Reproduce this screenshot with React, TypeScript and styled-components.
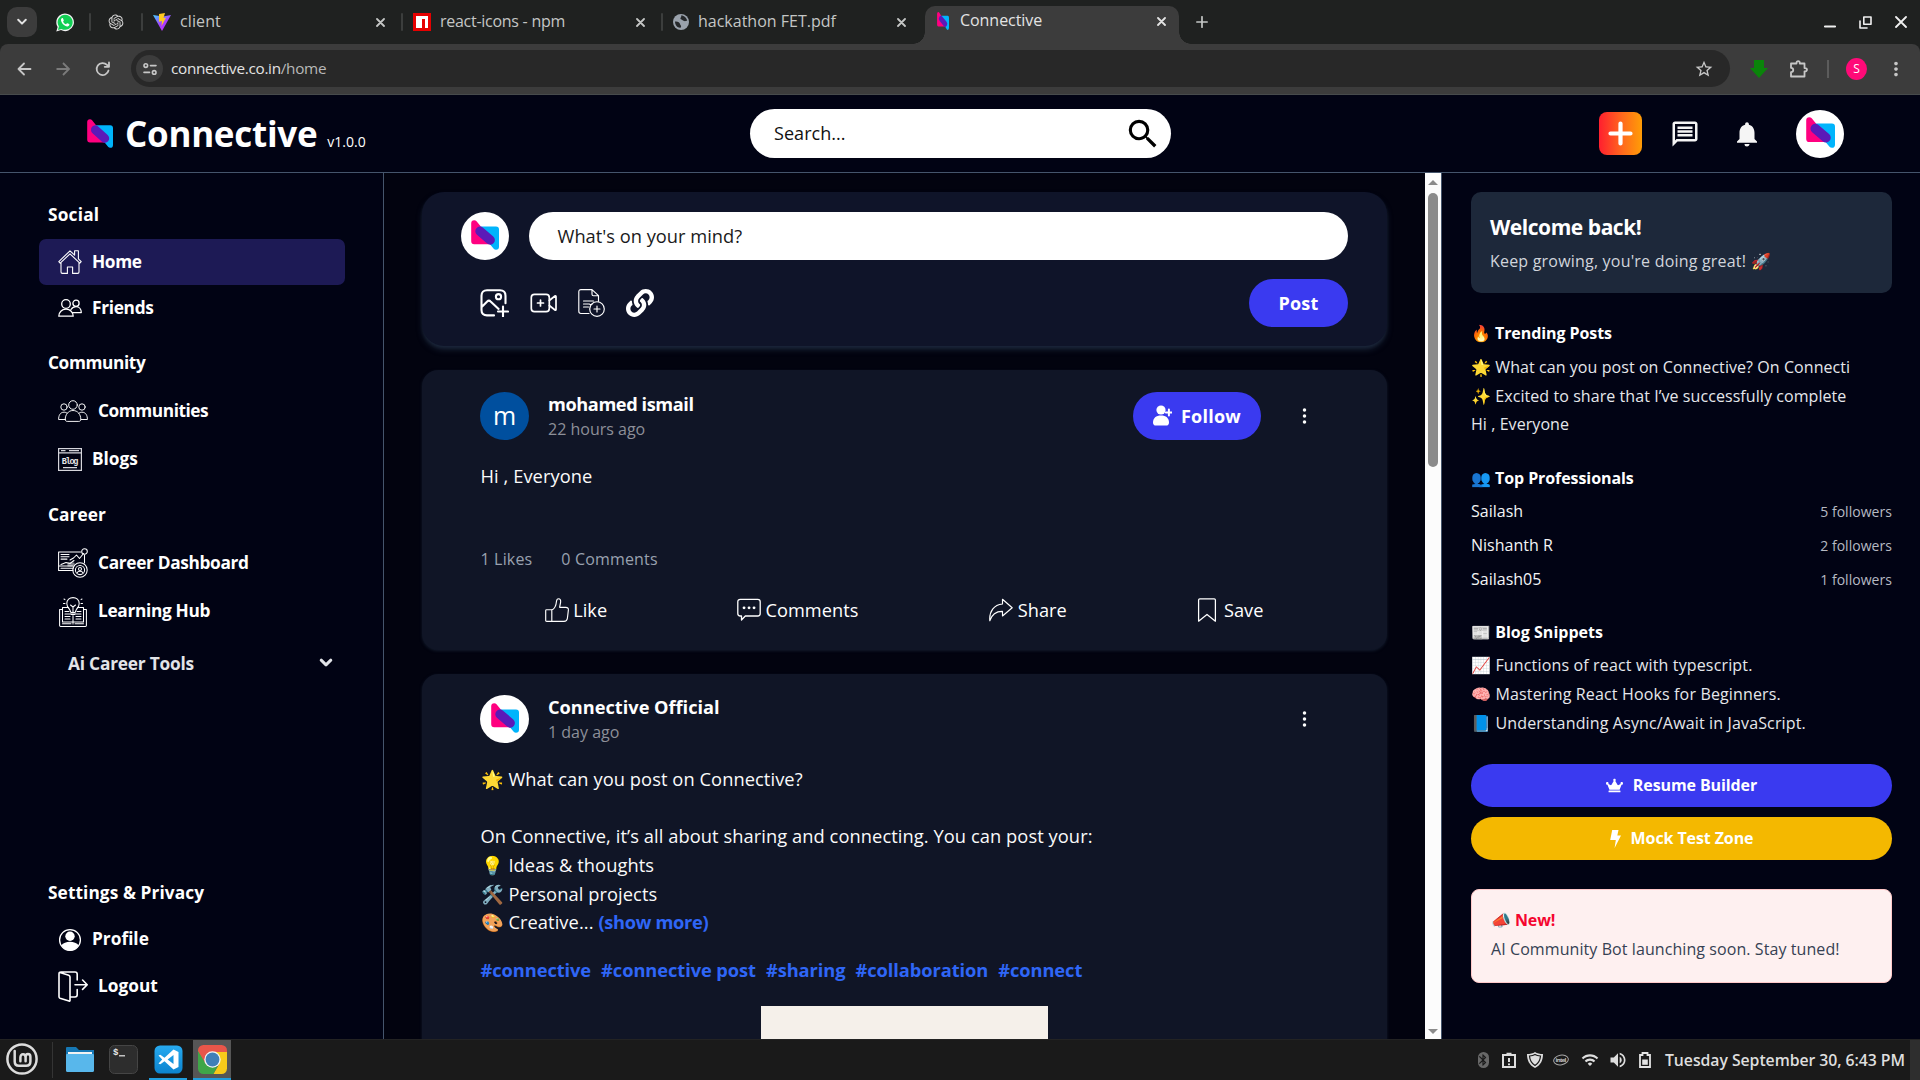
import React from "react";
import styled, { createGlobalStyle } from "styled-components";
import { MdSearch, MdOutlineMessage, MdNotifications, MdOutlineStarBorder, MdMoreVert, MdWifi, MdVolumeUp, MdBluetooth } from "react-icons/md";
import { FaLink, FaCrown } from "react-icons/fa";
import { RiOpenaiFill } from "react-icons/ri";

const GlobalStyle = createGlobalStyle`
  *, *::before, *::after { box-sizing: border-box; }
  body {
    margin: 0;
    overflow: hidden;
    background: #010314;
    color: #fff;
    font-family: "Open Sans", "Noto Sans", sans-serif;
  }
  svg { display: block; flex: none; }
`;

type Spaced = { $ls?: number };

const Screen = styled.div`
  width: 1920px;
  height: 1080px;
  display: flex;
  flex-direction: column;
  overflow: hidden;
`;

/* ---------- browser window ---------- */

const TabStrip = styled.div`
  height: 44px;
  display: flex;
  align-items: center;
  background: #1f2120;
  color: #c4c6c5;
  padding-left: 7px;
`;
const TabSearch = styled.div`
  width: 30px;
  height: 30px;
  border-radius: 10px;
  background: #3c3c3c;
  color: #e3e3e3;
  display: flex;
  align-items: center;
  justify-content: center;
`;
const PinnedTab = styled.div<{ $w: number; $shift?: number }>`
  width: ${(p) => p.$w}px;
  padding-left: ${(p) => p.$shift ?? 0}px;
  display: flex;
  justify-content: center;
`;
const TabDivider = styled.div`
  width: 2px;
  height: 18px;
  border-radius: 1px;
  background: #3c3e3d;
`;
const Tab = styled.div<{ $w: number; $active?: boolean; $right?: number }>`
  width: ${(p) => p.$w}px;
  height: ${(p) => (p.$active ? 38 : 30)}px;
  align-self: ${(p) => (p.$active ? "flex-end" : "center")};
  display: flex;
  align-items: center;
  gap: 9px;
  padding: ${(p) => (p.$active ? "0 13px 8px 12px" : `0 ${p.$right ?? 16}px 0 10px`)};
  background: ${(p) => (p.$active ? "#3c3c3c" : "transparent")};
  color: ${(p) => (p.$active ? "#e3e3e3" : "#c4c6c5")};
  border-radius: 10px 10px 0 0;
  position: relative;
  ${(p) =>
    p.$active &&
    `gap: 11px;
    &::before, &::after {
      content: "";
      position: absolute;
      bottom: 0;
      width: 12px;
      height: 12px;
    }
    &::before { left: -12px; background: radial-gradient(circle at 0 0, transparent 11.5px, #3c3c3c 12px); }
    &::after { right: -12px; background: radial-gradient(circle at 100% 0, transparent 11.5px, #3c3c3c 12px); }`}
`;
const TabTitle = styled.span<Spaced>`
  flex: 1;
  padding-bottom: 2px;
  font-size: 16px;
  line-height: 22px;
  white-space: nowrap;
  letter-spacing: ${(p) => p.$ls ?? 0}px;
`;
const NewTab = styled.div`
  width: 45px;
  display: flex;
  justify-content: center;
`;
const WindowButtons = styled.div`
  margin-left: auto;
  padding-right: 13px;
  display: flex;
  align-items: center;
  gap: 23px;
  color: #f0f0f0;
`;
const ToolbarBack = styled.div`
  background: #1f2120;
`;
const Toolbar = styled.div`
  height: 51px;
  display: flex;
  align-items: center;
  padding: 0 13px 1px 15px;
  background: #3c3c3c;
  border-bottom: 1px solid #474b4c;
  border-radius: 8px 8px 0 0;
  color: #c7c7c7;
`;
const NavButtons = styled.div`
  display: flex;
  width: 116px;
  gap: 21px;
`;
const Omnibox = styled.div`
  flex: 1;
  height: 37px;
  border-radius: 19px;
  background: #282828;
  display: flex;
  align-items: center;
  padding: 0 16px 0 5px;
`;
const SiteInfo = styled.div`
  width: 27px;
  height: 27px;
  border-radius: 50%;
  background: #3c3c3c;
  display: flex;
  align-items: center;
  justify-content: center;
`;
const Url = styled.span`
  flex: 1;
  margin-left: 8px;
  padding-bottom: 1px;
  font-size: 15.3px;
  letter-spacing: -0.3px;
  color: #e3e3e3;
  span { color: #b8b8b8; }
`;
const Extensions = styled.div`
  display: flex;
  align-items: center;
  width: 177px;
  padding-left: 20px;
`;
const ToolSeparator = styled.div`
  width: 2px;
  height: 18px;
  margin: 0 17px 0 18px;
  background: #5c5c5c;
`;
const ProfileDot = styled.div`
  width: 22px;
  height: 22px;
  margin-right: 18px;
  border-radius: 50%;
  background: #ff0a78;
  color: #fff;
  font-size: 12px;
  display: flex;
  align-items: center;
  justify-content: center;
`;

/* ---------- site header ---------- */

const Header = styled.header`
  height: 78px;
  display: grid;
  grid-template-columns: 750px 421px 1fr;
  align-items: center;
  border-bottom: 1px solid #45556c;
  background: #010314;
`;
const Brand = styled.div`
  display: flex;
  align-items: center;
  padding-left: 87px;
  height: 77px;
`;
const BrandName = styled.h1`
  margin: 0 10px 0 12px;
  font-size: 35px;
  line-height: 44px;
  font-weight: 700;
  letter-spacing: -0.28px;
`;
const Version = styled.span`
  font-size: 14px;
  line-height: 18px;
  padding-top: 16px;
`;
const SearchBox = styled.div`
  height: 49px;
  border-radius: 25px;
  background: #fff;
  color: #111;
  display: flex;
  align-items: center;
  justify-content: space-between;
  padding: 0 9px 0 24px;
  font-size: 18px;
  letter-spacing: 0.05px;
  span { padding-bottom: 1px; }
`;
const HeaderActions = styled.div`
  display: flex;
  align-items: center;
  justify-content: flex-end;
  padding-right: 76px;
`;
const CreateButton = styled.div`
  width: 43px;
  height: 43px;
  border-radius: 8px;
  background: linear-gradient(90deg, #ff1f2f, #ff6a1c 55%, #ff9d06);
  display: flex;
  align-items: center;
  justify-content: center;
  margin-right: 28px;
`;
const HeaderIcon = styled.div<{ $gap: number }>`
  margin-right: ${(p) => p.$gap}px;
  color: #f5f5f5;
`;
const Avatar = styled.div<{ $bg?: string; $w?: number }>`
  width: ${(p) => p.$w ?? 48}px;
  height: 48px;
  border-radius: 50%;
  flex: none;
  background: ${(p) => p.$bg ?? "#fff"};
  display: flex;
  align-items: center;
  justify-content: center;
  font-size: 25px;
  line-height: 44px;
  padding-bottom: 2px;
`;

/* ---------- columns ---------- */

const Columns = styled.main`
  height: 866px;
  display: grid;
  grid-template-columns: 384px 1041px 16px 479px;
  overflow: hidden;
`;
const Sidebar = styled.nav`
  display: flex;
  flex-direction: column;
  padding: 27px 38px 28px 39px;
  border-right: 1px solid #45556c;
`;
const SideHeading = styled.h2<Spaced & { $top?: number }>`
  margin: ${(p) => p.$top ?? 0}px 0 9px 9px;
  font-size: 17.3px;
  line-height: 30px;
  font-weight: 700;
  letter-spacing: ${(p) => p.$ls ?? 0}px;
`;
const SideItem = styled.div<Spaced & { $active?: boolean; $big?: boolean }>`
  height: ${(p) => (p.$big ? 48.5 : 46)}px;
  flex: none;
  display: flex;
  align-items: center;
  gap: 10px;
  padding-left: 19px;
  border-radius: 7px;
  background: ${(p) => (p.$active ? "#1d1a55" : "transparent")};
  font-size: 17.3px;
  font-weight: 700;
  letter-spacing: ${(p) => p.$ls ?? 0}px;
  span { padding-bottom: 2px; }
`;
const SideGroup = styled.div`
  height: 46px;
  margin-top: 5px;
  display: flex;
  align-items: center;
  justify-content: space-between;
  padding: 0 12px 2px 29px;
  color: #e2e4e8;
  font-size: 17.3px;
  font-weight: 700;
  letter-spacing: -0.2px;
`;
const SideSpacer = styled.div`
  flex: 1;
`;

const Feed = styled.section`
  background: #02030f;
  padding: 19px 38px 0;
  overflow: hidden;
`;
const Composer = styled.div`
  height: 154px;
  border-radius: 22px;
  padding: 20px 39px;
  background: #0f1429;
  box-shadow: 0 4px 6px -1px #1d293d, 0 2px 4px -2px #1d293d;
`;
const ComposerRow = styled.div`
  display: flex;
  gap: 20px;
`;
const ComposerInput = styled.div`
  flex: 1;
  height: 48px;
  border-radius: 24px;
  background: #fff;
  color: #1a1a1a;
  padding: 0 28.5px 2px;
  display: flex;
  align-items: center;
  font-size: 18.3px;
`;
const ComposerTools = styled.div`
  margin-top: 19px;
  height: 48px;
  padding-left: 19px;
  display: flex;
  align-items: center;
  gap: 19.6px;
`;
const Pill = styled.div<{ $w: number }>`
  width: ${(p) => p.$w}px;
  height: 48px;
  margin-left: auto;
  border-radius: 24px;
  background: #3a3af0;
  display: flex;
  align-items: center;
  justify-content: center;
  gap: 9px;
  padding-bottom: 1px;
  font-size: 18px;
  font-weight: 700;
  letter-spacing: 0.25px;
`;

const Card = styled.article<{ $h?: number; $top?: number }>`
  margin-top: 24px;
  height: ${(p) => p.$h ?? 400}px;
  border-radius: 16px;
  background: #101526;
  padding: ${(p) => p.$top ?? 21}px 58px 0;
  box-shadow: 0 1px 3px rgba(29, 41, 61, 0.6);
`;
const PostHead = styled.div`
  display: flex;
  align-items: center;
  height: 48px;
`;
const Author = styled.div`
  margin-left: 19px;
  padding-top: 2px;
`;
const AuthorName = styled.div<Spaced>`
  font-size: 18.2px;
  line-height: 25px;
  font-weight: 700;
  letter-spacing: ${(p) => p.$ls ?? 0}px;
`;
const PostTime = styled.div`
  font-size: 16px;
  line-height: 25px;
  color: #8d8f98;
`;
const MoreButton = styled.div<{ $push?: boolean }>`
  width: 50px;
  margin-left: ${(p) => (p.$push ? "auto" : "18px")};
  display: flex;
  justify-content: center;
`;
const PostBody = styled.div`
  margin-top: 21.5px;
  padding-left: 0.5px;
  color: #fafafa;
`;
const PostLine = styled.div`
  display: flex;
  gap: 5px;
  min-height: 28.8px;
  font-size: 18.3px;
  line-height: 28.8px;
  letter-spacing: 0.07px;
  white-space: pre;
`;
const ShowMore = styled.span`
  color: #2f66f6;
  font-weight: 700;
  letter-spacing: -0.35px;
`;
const Counts = styled.div`
  margin-top: 55px;
  display: flex;
  gap: 29px;
  font-size: 16px;
  line-height: 28px;
  letter-spacing: 0.16px;
  padding-left: 0.5px;
  color: #99a1af;
`;
const Actions = styled.div`
  margin-top: 13px;
  height: 48px;
  display: flex;
  align-items: center;
  justify-content: space-around;
`;
const Action = styled.div<{ $w: number }>`
  width: ${(p) => p.$w}px;
  display: flex;
  align-items: center;
  gap: 4.5px;
  font-size: 18.2px;
  letter-spacing: 0.08px;
`;
const Tags = styled.div`
  margin-top: 19px;
  display: flex;
  gap: 10px;
  padding-left: 0.5px;
  font-size: 18.3px;
  line-height: 28.8px;
  font-weight: 700;
  letter-spacing: -0.08px;
  color: #2f66f6;
`;
const PostImage = styled.div`
  width: 287px;
  height: 200px;
  margin: 21px auto 0;
  background: #f5f0ea;
`;

const ScrollTrack = styled.div`
  background: #fcfcfc;
  display: flex;
  flex-direction: column;
  align-items: center;
  padding: 7px 0 5px;
`;
const Arrow = styled.div<{ $down?: boolean }>`
  border: 5px solid transparent;
  ${(p) => (p.$down ? "border-top: 5px solid #8b8b8b; border-bottom: 0;" : "border-bottom: 5px solid #8b8b8b; border-top: 0;")}
`;
const Thumb = styled.div`
  width: 10px;
  height: 274px;
  margin: 8px 0 auto;
  border-radius: 5px;
  background: #8b8b8b;
`;

const RightBar = styled.aside`
  border-left: 1px solid #45556c;
  padding: 19px 28px 0 29px;
`;
const Welcome = styled.div`
  height: 101px;
  padding: 19px 19px;
  border-radius: 10px;
  background: #1d283a;
`;
const WelcomeTitle = styled.div`
  font-size: 21px;
  line-height: 32px;
  font-weight: 700;
  letter-spacing: -0.45px;
`;
const WelcomeText = styled.div`
  font-size: 16px;
  line-height: 36px;
  letter-spacing: 0.2px;
  color: #d1d5dc;
`;
const RightHeading = styled.h3<Spaced & { $top: number; $bottom: number }>`
  margin: ${(p) => p.$top}px 0 ${(p) => p.$bottom}px;
  font-size: 16px;
  line-height: 28.8px;
  font-weight: 700;
  letter-spacing: ${(p) => p.$ls ?? -0.08}px;
`;
const RightLine = styled.div<Spaced>`
  font-size: 16px;
  line-height: 28.8px;
  letter-spacing: ${(p) => p.$ls ?? 0.07}px;
  white-space: nowrap;
  color: #e5e7eb;
`;
const Person = styled.div`
  height: 34px;
  display: flex;
  align-items: center;
  justify-content: space-between;
  font-size: 16px;
  color: #f3f4f6;
  small {
    font-size: 14px;
    color: #b6bac3;
    letter-spacing: 0.04px;
  }
`;
const WideButton = styled.div<{ $bg: string; $top: number }>`
  height: 43px;
  margin-top: ${(p) => p.$top}px;
  border-radius: 22px;
  background: ${(p) => p.$bg};
  display: flex;
  align-items: center;
  justify-content: center;
  gap: 10px;
  font-size: 16px;
  font-weight: 700;
  letter-spacing: -0.1px;
  span { padding-bottom: 1px; }
`;
const Notice = styled.div`
  height: 94px;
  margin-top: 29px;
  padding: 16px 19px;
  border: 1px solid #ffc9c9;
  border-radius: 8px;
  background: #fef0f0;
  font-size: 16px;
  line-height: 29px;
  color: #364153;
  letter-spacing: 0.08px;
`;
const NoticeTitle = styled.div`
  color: #f5052f;
  font-weight: 700;
  letter-spacing: -0.1px;
`;

/* ---------- desktop panel ---------- */

const Taskbar = styled.footer`
  height: 41px;
  display: flex;
  align-items: stretch;
  background: #1a1a1a;
  border-top: 1px solid #232323;
`;
const Launcher = styled.div<{ $w: number; $open?: boolean; $focused?: boolean }>`
  width: ${(p) => p.$w}px;
  display: flex;
  align-items: center;
  justify-content: center;
  padding-bottom: 2px;
  background: ${(p) => (p.$focused ? "#565656" : "transparent")};
  box-shadow: ${(p) => (p.$open ? "inset 0 -2px #1f9ede" : "none")};
  margin-right: ${(p) => (p.$open ? 6 : 0)}px;
`;
const PanelLine = styled.div`
  width: 1px;
  margin: 2px 10px 2px 8px;
  background: #343434;
`;
const Tray = styled.div`
  margin-left: auto;
  display: flex;
  align-items: center;
  color: #dedede;
`;
const TrayIcon = styled.div<{ $w: number; $dim?: boolean }>`
  width: ${(p) => p.$w}px;
  display: flex;
  justify-content: center;
  opacity: ${(p) => (p.$dim ? 0.4 : 1)};
`;
const BluetoothBadge = styled.div`
  width: 11px;
  height: 16px;
  border-radius: 5.5px;
  background: #dedede;
  color: #1a1a1a;
  display: flex;
  align-items: center;
  justify-content: center;
`;
const Clock = styled.div`
  width: 240px;
  margin: 0 5px 0 7px;
  font-size: 15.8px;
  font-weight: 600;
  letter-spacing: -0.05px;
  white-space: nowrap;
`;
const DesktopCorner = styled.div`
  width: 10px;
  height: 100%;
  background: #2e2e2e;
`;

/* ---------- drawings ---------- */

const Logo = ({ w = 28, h = 30 }: { w?: number; h?: number }) => (
  <svg width={w} height={h} viewBox="0 0 28 30" preserveAspectRatio="none">
    <path d="M3.200 3.200 L18 21.200 H3.200 Z" fill="#ff0080" stroke="#ff0080" strokeWidth="6" strokeLinejoin="round" />
    <path d="M10.500 9.400 H25 V26.800 Z" fill="#00b4fc" stroke="#00b4fc" strokeWidth="6" strokeLinejoin="round" />
    <path d="M9 11.200 L19.200 20" stroke="#5b1ab8" strokeWidth="9.400" strokeLinecap="round" />
  </svg>
);

const Line = ({ w, h, vb, sw = 1.5, children }: { w: number; h: number; vb: string; sw?: number; children: React.ReactNode }) => (
  <svg width={w} height={h} viewBox={vb} fill="none" stroke="currentColor" strokeWidth={sw} strokeLinecap="round" strokeLinejoin="round">
    {children}
  </svg>
);

const Close = () => (
  <Line w={9} h={9} vb="0 0 9 9" sw={1.8}>
    <path d="M1 1l7 7M8 1l-7 7" />
  </Line>
);
const WhatsAppIcon = () => (
  <svg width="18" height="19" viewBox="0 0 18 19">
    <path d="M.3 18.500L1.600 14C.7 12.600.3 11 .3 9.300A8.800 8.800 0 1 1 5 17.100z" fill="#f4f4f4" />
    <path d="M1.900 16.900L2.900 13.500A7.500 7.500 0 1 1 5.500 15.900z" fill="#12cf54" />
    <path d="M6.300 5c-.5 0-1.300.7-1.300 2 0 2.700 3.400 6.200 6.300 6.400 1.200 0 2.100-.8 2.100-1.800 0-.4-.1-.4-2-1.300-.5-.2-.7.1-1.300.9-.4.400-2.600-1.300-3-2.500-.1-.3.8-.8.7-1.300C7.300 6 7 5.100 6.700 5z" fill="#fff" />
  </svg>
);
const HomeIcon = () => (
  <Line w={24} h={24} vb="0 0 24 24" sw={1.1}>
    <path d="M.8 11.6L12 .8l4.6 4.4V.8h3.8v8l2.8 2.8-1.4 1.6L12 3.9l-9.800 9.300zM3 12.800V22.100c0 .8.5 1.300 1.300 1.300H9.400V17h5.200v6.400h5.100c.8 0 1.300-.5 1.300-1.300V12.800" />
  </Line>
);
const FriendsIcon = () => (
  <Line w={24} h={18} vb="0 0 24 18" sw={1.3}>
    <circle cx="8" cy="5" r="4.300" />
    <circle cx="18" cy="4.300" r="3.100" />
    <path d="M.8 17.200c0-4 3-7 7.200-7s7.200 3 7.200 7zM13 10.500c1.200-1.800 3-2.800 5-2.800 3.200 0 5.300 2.600 5.300 5.900h-8.500" />
  </Line>
);
const CommunitiesIcon = () => (
  <Line w={30} h={22} vb="0 0 30 22" sw={0.95}>
    <circle cx="15" cy="5" r="4.300" />
    <circle cx="6" cy="7" r="3.200" />
    <circle cx="24" cy="7" r="3.200" />
    <path d="M7.200 19.500c0-5 3-9 7.800-9s7.800 4 7.800 9c0 1.200-.8 1.900-2 1.900H9.200c-1.200 0-2-.7-2-1.900zM7 19.500H.6c0-4 1.600-7.300 5.400-7.300 1.200 0 2.300.3 3.100 1M23 19.500h6.400c0-4-1.600-7.300-5.400-7.300-1.200 0-2.300.3-3.100 1" />
  </Line>
);
const BlogIcon = () => (
  <svg width="24" height="23" viewBox="0 0 24 23" fill="none" stroke="#d6d6dc" strokeWidth="1.200">
    <rect x=".6" y=".6" width="22.800" height="21.800" />
    <path d="M.6 4.800h22.800M3 2.700h4.500M11 2.700h10M5 19.600h14" />
    <text x="3.800" y="15.800" fontFamily="Liberation Mono, monospace" fontSize="8.500" fontWeight="700" fill="#e8e8e8" stroke="none" textLength="16.500">Blog</text>
  </svg>
);
const DashboardIcon = () => (
  <Line w={30} h={30} vb="0 0 30 30" sw={1.05}>
    <path d="M15 22.500H.6V4h22M26.500 7v8M.6 18h14M3 6.500h8M3 8.800h8M3 11.100h6M3 20.200h12M12 12l3.500-2 3 -3 3 3.500 4-5M3 16.500l5-2 4 1 4-3" />
    <path d="M10 15h6v3h-6z" fill="currentColor" opacity=".5" />
    <circle cx="26.500" cy="3.500" r="2.800" />
    <circle cx="22" cy="22" r="7.200" />
    <circle cx="22" cy="22" r="4.600" />
    <circle cx="22" cy="21" r="1.500" />
    <path d="M19.200 24.800c.5-2 5.100-2 5.600 0" />
  </Line>
);
const LearningIcon = () => (
  <Line w={30} h={30} vb="0 0 30 30" sw={1.05}>
    <path d="M11.600 12.500C9.800 10.800 8.800 9 8.800 6.500 8.800 3 11.500.6 15 .6s6.200 2.400 6.200 5.900c0 2.500-1 4.300-2.800 6L17 15.500h-4zM12.500 8l2.500 2 2.500-2M15 10v8M13 15.500v2h4v-2M6 2l1 .6M5.500 6.500H7M24 2l-1 .6M24.500 6.500H23" />
    <path d="M10.500 10.500H4.500V25H15h10.500V10.500h-6M15 19v8M4.500 12.500H1.600V28.500c0 .6.400.9 1 .9h24.800c.6 0 1-.3 1-.9V12.500h-2.900M4.500 26.800h8.500M17 26.800h8.500M7 17h5M7 19.500h5M7 22h5M18 17h5M18 19.500h5M18 22h5M7 14.500h4M19 14.500h4" />
  </Line>
);
const ProfileIcon = () => (
  <svg width="24" height="24" viewBox="0 0 24 24">
    <circle cx="12" cy="12" r="10.400" fill="none" stroke="#fff" strokeWidth="1.300" />
    <circle cx="12" cy="8.300" r="4.700" fill="#fff" />
    <path d="M3.300 17.300C5.200 14.900 8.300 13.700 12 13.700s6.800 1.200 8.700 3.600C19 20.800 15.800 22.900 12 22.900S5 20.800 3.300 17.300z" fill="#fff" />
  </svg>
);
const LogoutIcon = () => (
  <Line w={30} h={31} vb="0 0 30 31" sw={1.600}>
    <path d="M1 2.800C1 1.600 1.800 1 3 1h14c1.500 0 2.200.7 2.200 2.200V9M19.200 18.500v5.300c0 1.500-.7 2.200-2.200 2.200h-4.500M2 1.500l8.700 2.700c.8.300 1.300.8 1.300 1.700v23.600c0 .6-.4.8-1 .6L2 27.200c-.7-.3-1-.8-1-1.500V2.800M17 13.700h12M24.600 9l4.600 4.700-4.600 4.700" />
  </Line>
);
const ImageIcon = () => (
  <Line w={29} h={28} vb="0 0 29 28" sw={2.100}>
    <path d="M14 26.400H7c-3.500 0-5.500-2-5.500-5.500V6.800C1.500 3.300 3.500 1.300 7 1.300h13c3.500 0 5.500 2 5.500 5.500v7.500M1.700 18l5.500-5.600c1-1 2.400-1 3.400 0l8 7.500M18 22.500h10M23 17.500v10" />
    <circle cx="18.500" cy="7.700" r="2.600" />
  </Line>
);
const VideoIcon = () => (
  <Line w={29} h={20} vb="0 0 29 20" sw={1.700}>
    <rect x="2.300" y="1.300" width="18" height="17.300" rx="3.200" />
    <path d="M8.500 10h6M11.500 7v6M20.300 7.500l5.700-4.500c.5-.4 1-.1 1 .5v13c0 .6-.5.9-1 .5l-5.700-4.500" />
  </Line>
);
const DocIcon = () => (
  <Line w={29} h={28} vb="0 0 29 28" sw={1.150}>
    <path d="M12 24.500H4C2.600 24.500 1.800 23.700 1.800 22.300V2.800C1.800 1.400 2.600.6 4 .6h11l6.500 6v5.700M15 .6v4.600c0 1 .5 1.500 1.500 1.500h5M6.500 12h10M6.500 15h6M6.500 18h5M13 15.500h2" />
    <circle cx="20" cy="20" r="7.300" />
    <path d="M17 20h6M20 17v6" />
  </Line>
);
const PersonPlus = () => (
  <svg width="19" height="21" viewBox="0 0 19 21" fill="#fff">
    <circle cx="8" cy="5" r="4.600" />
    <path d="M0 17.500C0 13 3 10.400 8 10.400s8 2.600 8 7.100c0 2-1 3.100-3 3.100H3c-2 0-3-1.100-3-3.100z" />
    <path d="M15.900 4.500v6M12.900 7.500h6" stroke="#fff" strokeWidth="2" strokeLinecap="round" />
  </svg>
);
const Dots = () => (
  <svg width="6" height="16" viewBox="0 0 6 16" fill="#fff">
    <circle cx="3.500" cy="2" r="1.750" />
    <circle cx="3.500" cy="8" r="1.750" />
    <circle cx="3.500" cy="14" r="1.750" />
  </svg>
);
const LikeIcon = () => (
  <Line w={24} h={24} vb="0 0 24 24" sw={1.150}>
    <path d="M.7 12.500c0-.5.300-.8.800-.8h5.300v11.700H1.700c-.6 0-1-.4-1-1zM6.800 12c3-1.200 4.300-4.300 4.700-8.700.2-1.700.8-2.600 2-2.600 1.700 0 2.500 1.400 2 4.200l-.9 4.400h6.200c1.700 0 2.700 1 2.600 2.600l-1 8.400c-.3 2.200-1.200 3.100-3.400 3.100H6.800" />
  </Line>
);
const CommentIcon = () => (
  <Line w={24} h={24} vb="0 0 24 24" sw={1.300}>
    <path d="M3.300 1.300h17.400c1.600 0 2.500.9 2.500 2.500v11.700c0 1.600-.9 2.500-2.500 2.500H8.300l-3.800 4V18H3.300C1.700 18 .8 17.100.8 15.500V3.800c0-1.600.9-2.500 2.500-2.500z" />
    <path d="M7 9.800h.1M12 9.800h.1M17 9.800h.1" strokeWidth="2.800" />
  </Line>
);
const ShareIcon = () => (
  <Line w={24} h={24} vb="0 0 24 24" sw={1.150}>
    <path d="M13.500 1.200L23.200 9.800l-9.700 8.200v-4.600C7.500 13.300 3 16 .8 22.800 0 13.500 5 6.600 13.500 6z" />
  </Line>
);
const SaveIcon = () => (
  <Line w={24} h={24} vb="0 0 24 24" sw={1.250}>
    <path d="M3.600 2c0-.8.400-1.200 1.200-1.200h14.400c.8 0 1.200.4 1.200 1.200v21.200L12 16.500l-8.400 6.700z" />
  </Line>
);
const BoltIcon = () => (
  <svg width="11" height="18" viewBox="0 0 11 18" fill="#fff">
    <path d="M2.200 0h6.300L7.300 5.500H11L4.600 18 5.800 10H.2z" />
  </svg>
);
const ViteIcon = () => (
  <svg width="18" height="18" viewBox="0 0 18 18">
    <defs>
      <linearGradient id="vite" x1="0" y1="0" x2=".7" y2="1">
        <stop offset="0" stopColor="#41d1ff" />
        <stop offset=".6" stopColor="#a83cff" />
        <stop offset="1" stopColor="#bd34fe" />
      </linearGradient>
    </defs>
    <path d="M0 2l9 16 9-16-8 1.400z" fill="url(#vite)" />
    <path d="M6 1l6-1-1.500 5L13 4.800 8.500 13l.5-5-3 .7z" fill="#ffc91f" />
  </svg>
);
const NpmIcon = () => (
  <svg width="18" height="18" viewBox="0 0 18 18">
    <path d="M0 0h18v18H0z" fill="#e60000" />
    <path d="M3 3h12v12h-3V6H9v9H3z" fill="#fff" />
  </svg>
);
const GlobeIcon = () => (
  <svg width="16" height="16" viewBox="0 0 16 16">
    <circle cx="8" cy="8" r="8" fill="#9aa2ac" />
    <path d="M2 7.500c3-.3 4.500.7 5 2.500.3 1.500 1.500 1 1 3.500-3 .8-6-2-6-6zM8 1.500c1 1.500-1 2-.5 3.500 1.500.5 2 1.500 3.500 2s2-.5 3.200 0C14 4 11 1.300 8 1.500z" fill="#26292b" />
  </svg>
);
const MintIcon = () => (
  <svg width="32" height="32" viewBox="0 0 32 32" fill="none" stroke="#dcdcdc">
    <circle cx="16" cy="16" r="14.600" strokeWidth="2.500" />
    <path d="M8.700 8v10.500c0 2.800 1.500 4.300 4.200 4.300h7.200c2.700 0 4.300-1.500 4.300-4.300v-4.700c0-3.800-4.800-3.800-4.800 0v4.400M19.600 14.500c0-4.500-5.200-4.500-5.200 0v3.700" strokeWidth="2.500" strokeLinecap="round" />
  </svg>
);
const FolderIcon = () => (
  <svg width="28" height="25" viewBox="0 0 28 25">
    <path d="M0 1.200C0 .5.500 0 1.200 0H10l3 3h15v10H0z" fill="#1678b5" />
    <path d="M2 5h24v4H2z" fill="#f2f2f2" />
    <path d="M0 8.200C0 7.400.6 7 1.300 7h25.400c.7 0 1.300.4 1.300 1.200v15.600c0 .7-.5 1.200-1.200 1.200H1.200C.5 25 0 24.500 0 23.800z" fill="#58b7eb" />
  </svg>
);
const TerminalIcon = () => (
  <svg width="29" height="29" viewBox="0 0 29 29">
    <rect x=".5" y=".5" width="28" height="28" rx="5" fill="#2d2d2d" stroke="#454545" />
    <text x="4" y="10" fontFamily="Liberation Mono, monospace" fontSize="9" fontWeight="700" fill="#e8e8e8">$</text>
    <path d="M10 10.800h6" stroke="#e8e8e8" strokeWidth="1.200" />
  </svg>
);
const CodeIcon = () => (
  <svg width="29" height="29" viewBox="0 0 29 29">
    <defs>
      <linearGradient id="code" x1="0" y1="0" x2="0" y2="1">
        <stop offset="0" stopColor="#27aaf0" />
        <stop offset="1" stopColor="#0c84cf" />
      </linearGradient>
    </defs>
    <rect x=".5" y=".5" width="28" height="28" rx="5.500" fill="url(#code)" />
    <path fillRule="evenodd" fill="#fff" d="M19.500 4.500L10.500 12.800 6.300 9.700 4.500 10.600 8.200 14.500 4.500 18.400 6.300 19.300 10.500 16.200 19.500 24.500 24.500 22V7zM19.500 10v9L13.600 14.500z" />
  </svg>
);
const ChromeIcon = () => (
  <svg width="29" height="29" viewBox="0 0 29 29">
    <defs>
      <clipPath id="tile"><rect width="29" height="29" rx="5.500" /></clipPath>
    </defs>
    <g clipPath="url(#tile)">
      <path d="M0 0h29v7.500H14.500v7L7 19 0 7z" fill="#e8564a" />
      <path d="M0 6l8.500 14 6-5 6 4L15.500 29H0z" fill="#3fa648" />
      <path d="M14.500 7H29v22H15.500l6-10.500-7-4z" fill="#f8ca1a" />
    </g>
    <circle cx="14.500" cy="14.500" r="8.200" fill="#f5f5f5" />
    <circle cx="14.500" cy="14.500" r="6.900" fill="#3f7fb8" />
  </svg>
);
const PuzzleIcon = () => (
  <Line w={20} h={20} vb="0 0 20 20" sw={1.800}>
    <path d="M2 4.500h5.500C7.300 1.200 11 1.200 10.800 4.500h4.700v4.600c3.300-.2 3.300 3.500 0 3.300v5.100H2v-4.300c3-.1 3-4.300 0-4.400z" />
  </Line>
);
const ShieldIcon = () => (
  <svg width="16" height="16" viewBox="0 0 16 16">
    <path d="M8 0c2 1.500 5 2 8 2 0 6-2 11-8 14C2 13 0 8 0 2c3 0 6-.5 8-2z" fill="#dedede" />
    <path d="M8 2.500c1.500 1 3.500 1.400 5.500 1.500-.3 4-1.800 7.300-5.500 9.400C4.300 11.300 2.800 8 2.500 4 4.500 3.900 6.500 3.500 8 2.500z" fill="none" stroke="#1a1a1a" strokeWidth="1.200" />
  </svg>
);
const ClipIcon = () => (
  <svg width="14" height="16" viewBox="0 0 14 16" fill="none" stroke="#dedede" strokeWidth="2">
    <path d="M1 3h12v12H1zM4.500 1.800h5M7 6v4M7 11.500v1.800" />
  </svg>
);
const IntelIcon = () => (
  <svg width="16" height="12" viewBox="0 0 16 12">
    <ellipse cx="8" cy="6" rx="7.400" ry="4.800" fill="none" stroke="#a8a8a8" strokeWidth="1" transform="rotate(-10 8 6)" />
    <text x="2.600" y="8.200" fontFamily="Open Sans, sans-serif" fontSize="6" fontWeight="700" fill="#c4c4c4" textLength="10.800">intel</text>
  </svg>
);
const BatteryIcon = () => (
  <svg width="12" height="16" viewBox="0 0 12 16">
    <path d="M1 3h2.500V1h5v2H11v12H1z" fill="none" stroke="#e4e4e4" strokeWidth="1.800" />
    <path d="M3.200 7.500h5.600v5.300H3.200z" fill="#e4e4e4" />
  </svg>
);

/* ---------- content ---------- */

const trending = ["🌟 What can you post on Connective? On Connecti", "✨ Excited to share that I’ve successfully complete", "Hi , Everyone"];
const people: [string, number][] = [["Sailash", 5], ["Nishanth R", 2], ["Sailash05", 1]];
const snippets = ["📈 Functions of react with typescript.", "🧠 Mastering React Hooks for Beginners.", "📘 Understanding Async/Await in JavaScript."];
const tags = ["#connective", "#connective post", "#sharing", "#collaboration", "#connect"];
const postLines = [
  "🌟 What can you post on Connective?",
  "",
  "On Connective, it’s all about sharing and connecting. You can post your:",
  "💡 Ideas & thoughts",
  "🛠️ Personal projects",
];

function Browser() {
  return (
    <>
      <TabStrip>
        <TabSearch>
          <Line w={12} h={8} vb="0 0 12 8" sw={2}><path d="M2.200 1.800L6 5.600l3.800-3.800" /></Line>
        </TabSearch>
        <PinnedTab $w={52} $shift={4}><WhatsAppIcon /></PinnedTab>
        <TabDivider />
        <PinnedTab $w={50}><RiOpenaiFill size={18} color="#d6d6d6" /></PinnedTab>
        <TabDivider />
        <Tab $w={258}><ViteIcon /><TabTitle $ls={0.1}>client</TabTitle><Close /></Tab>
        <TabDivider />
        <Tab $w={258}><NpmIcon /><TabTitle $ls={-0.27}>react-icons - npm</TabTitle><Close /></Tab>
        <TabDivider />
        <Tab $w={262} $right={19}><GlobeIcon /><TabTitle $ls={0}>hackathon FET.pdf</TabTitle><Close /></Tab>
        <Tab $w={254} $active><Logo w={12} h={18} /><TabTitle $ls={-0.05}>Connective</TabTitle><Close /></Tab>
        <NewTab><Line w={12} h={12} vb="0 0 12 12" sw={1.700}><path d="M6 .8v10.400M.8 6h10.400" /></Line></NewTab>
        <WindowButtons>
          <Line w={12} h={12} vb="0 0 12 12" sw={1.800}><path d="M.8 10.500h10.400" /></Line>
          <Line w={13} h={13} vb="0 0 13 13" sw={1.600}><path d="M4.800 1h7.200v7.200H4.800zM1 5v7h7" /></Line>
          <Line w={12} h={12} vb="0 0 12 12" sw={1.800}><path d="M1 1l10 10M11 1L1 11" /></Line>
        </WindowButtons>
      </TabStrip>
      <ToolbarBack>
        <Toolbar>
          <NavButtons>
            <Line w={18} h={16} vb="0 0 18 16" sw={1.800}><path d="M15.500 8H3.500M9 2.500L3.500 8 9 13.500" /></Line>
            <svg width="18" height="16" viewBox="0 0 18 16" fill="none" stroke="#7b7b7b" strokeWidth="1.800"><path d="M2.500 8h12M9 2l6 6-6 6" /></svg>
            <Line w={18} h={16} vb="0 0 18 16" sw={1.800}><path d="M15.500 9.500a6 6 0 1 1-1.500-5.600l1.500 1.800M16 1.500v4.300h-4.300" /></Line>
          </NavButtons>
          <Omnibox>
            <SiteInfo>
              <Line w={14} h={12} vb="0 0 14 12" sw={1.600}><circle cx="2.800" cy="2.600" r="1.800" /><path d="M7.500 2.600H13M1 9.400h5.500" /><circle cx="11.200" cy="9.400" r="1.800" /></Line>
            </SiteInfo>
            <Url>connective.co.in<span>/home</span></Url>
            <MdOutlineStarBorder size={20} />
          </Omnibox>
          <Extensions>
            <svg width="18" height="18" viewBox="0 0 18 18" fill="#0a840a"><path d="M4 0h10v8h4l-9 10L0 8h4z" /></svg>
            <svg width="21" height="1" />
            <PuzzleIcon />
            <ToolSeparator />
            <ProfileDot>S</ProfileDot>
            <MdMoreVert size={22} />
          </Extensions>
        </Toolbar>
      </ToolbarBack>
    </>
  );
}

function LeftNav() {
  return (
    <Sidebar>
      <SideHeading $ls={0.2}>Social</SideHeading>
      <SideItem $active $ls={-0.35}><HomeIcon /><span>Home</span></SideItem>
      <SideItem $ls={-0.3}><FriendsIcon /><span>Friends</span></SideItem>
      <SideHeading $top={17} $ls={-0.4}>Community</SideHeading>
      <SideItem $big $ls={-0.45}><CommunitiesIcon /><span>Communities</span></SideItem>
      <SideItem $big $ls={-0.05}><BlogIcon /><span>Blogs</span></SideItem>
      <SideHeading $top={16} $ls={0.05}>Career</SideHeading>
      <SideItem $big $ls={-0.34}><DashboardIcon /><span>Career Dashboard</span></SideItem>
      <SideItem $big $ls={-0.32}><LearningIcon /><span>Learning Hub</span></SideItem>
      <SideGroup>
        Ai Career Tools
        <Line w={14} h={10} vb="0 0 14 10" sw={3}><path d="M2.200 2.200L7 6.800l4.800-4.600" /></Line>
      </SideGroup>
      <SideSpacer />
      <SideHeading $ls={0.08}>Settings &amp; Privacy</SideHeading>
      <SideItem $ls={0}><ProfileIcon /><span>Profile</span></SideItem>
      <SideItem $big $ls={0}><LogoutIcon /><span>Logout</span></SideItem>
    </Sidebar>
  );
}

function FeedColumn() {
  return (
    <Feed>
      <Composer>
        <ComposerRow>
          <Avatar><Logo /></Avatar>
          <ComposerInput>What's on your mind?</ComposerInput>
        </ComposerRow>
        <ComposerTools>
          <ImageIcon />
          <VideoIcon />
          <DocIcon />
          <FaLink size={28} />
          <Pill $w={99}>Post</Pill>
        </ComposerTools>
      </Composer>

      <Card $h={280} $top={22}>
        <PostHead>
          <Avatar $bg="#004f9e" $w={49}>m</Avatar>
          <Author>
            <AuthorName $ls={-0.42}>mohamed ismail</AuthorName>
            <PostTime>22 hours ago</PostTime>
          </Author>
          <Pill $w={128}><PersonPlus />Follow</Pill>
          <MoreButton><Dots /></MoreButton>
        </PostHead>
        <PostBody><PostLine>Hi , Everyone</PostLine></PostBody>
        <Counts><span>1 Likes</span><span>0 Comments</span></Counts>
        <Actions>
          <Action $w={63}><LikeIcon /><span>Like</span></Action>
          <Action $w={123}><CommentIcon /><span>Comments</span></Action>
          <Action $w={77}><ShareIcon /><span>Share</span></Action>
          <Action $w={69}><SaveIcon /><span>Save</span></Action>
        </Actions>
      </Card>

      <Card>
        <PostHead>
          <Avatar $w={49}><Logo /></Avatar>
          <Author>
            <AuthorName $ls={0}>Connective Official</AuthorName>
            <PostTime>1 day ago</PostTime>
          </Author>
          <MoreButton $push><Dots /></MoreButton>
        </PostHead>
        <PostBody>
          {postLines.map((t, i) => <PostLine key={i}>{t}</PostLine>)}
          <PostLine><span>🎨 Creative...</span><ShowMore>(show more)</ShowMore></PostLine>
        </PostBody>
        <Tags>{tags.map((t) => <span key={t}>{t}</span>)}</Tags>
        <PostImage />
      </Card>
    </Feed>
  );
}

function RightColumn() {
  return (
    <RightBar>
      <Welcome>
        <WelcomeTitle>Welcome back!</WelcomeTitle>
        <WelcomeText>Keep growing, you're doing great! 🚀</WelcomeText>
      </Welcome>
      <RightHeading $top={25.6} $bottom={5.4}>🔥 Trending Posts</RightHeading>
      {trending.map((t) => <RightLine key={t}>{t}</RightLine>)}
      <RightHeading $top={25} $bottom={1.4}>👥 Top Professionals</RightHeading>
      {people.map(([name, n]) => (
        <Person key={name}><span>{name}</span><small>{n} followers</small></Person>
      ))}
      <RightHeading $top={21.6} $bottom={4.4} $ls={0.02}>📰 Blog Snippets</RightHeading>
      {snippets.map((t) => <RightLine key={t} $ls={0.15}>{t}</RightLine>)}
      <WideButton $bg="#3a3af0" $top={26.800}><FaCrown size={17} /><span>Resume Builder</span></WideButton>
      <WideButton $bg="#f4b800" $top={10}><BoltIcon /><span>Mock Test Zone</span></WideButton>
      <Notice>
        <NoticeTitle>📣 New!</NoticeTitle>
        AI Community Bot launching soon. Stay tuned!
      </Notice>
    </RightBar>
  );
}

export default function App() {
  return (
    <Screen>
      <GlobalStyle />
      <Browser />
      <Header>
        <Brand>
          <Logo w={26} h={29} />
          <BrandName>Connective</BrandName>
          <Version>v1.0.0</Version>
        </Brand>
        <SearchBox><span>Search...</span><MdSearch size={38} color="#000" /></SearchBox>
        <HeaderActions>
          <CreateButton><Line w={25} h={25} vb="0 0 25 25" sw={4.200}><path d="M12.500 2.500v20M2.500 12.500h20" /></Line></CreateButton>
          <HeaderIcon $gap={32}><MdOutlineMessage size={30} /></HeaderIcon>
          <HeaderIcon $gap={34}><MdNotifications size={30} /></HeaderIcon>
          <Avatar><Logo w={29} h={31} /></Avatar>
        </HeaderActions>
      </Header>
      <Columns>
        <LeftNav />
        <FeedColumn />
        <ScrollTrack><Arrow /><Thumb /><Arrow $down /></ScrollTrack>
        <RightColumn />
      </Columns>
      <Taskbar>
        <Launcher $w={44}><MintIcon /></Launcher>
        <PanelLine />
        <Launcher $w={34}><FolderIcon /></Launcher>
        <Launcher $w={52}><TerminalIcon /></Launcher>
        <Launcher $w={38} $open><CodeIcon /></Launcher>
        <Launcher $w={38} $open $focused><ChromeIcon /></Launcher>
        <Tray>
          <TrayIcon $w={24} $dim><BluetoothBadge><MdBluetooth size={14} /></BluetoothBadge></TrayIcon>
          <TrayIcon $w={28}><ClipIcon /></TrayIcon>
          <TrayIcon $w={24}><ShieldIcon /></TrayIcon>
          <TrayIcon $w={28}><IntelIcon /></TrayIcon>
          <TrayIcon $w={29}><MdWifi size={18} /></TrayIcon>
          <TrayIcon $w={27}><MdVolumeUp size={20} /></TrayIcon>
          <TrayIcon $w={27}><BatteryIcon /></TrayIcon>
          <Clock>Tuesday September 30, 6:43 PM</Clock>
          <DesktopCorner />
        </Tray>
      </Taskbar>
    </Screen>
  );
}
